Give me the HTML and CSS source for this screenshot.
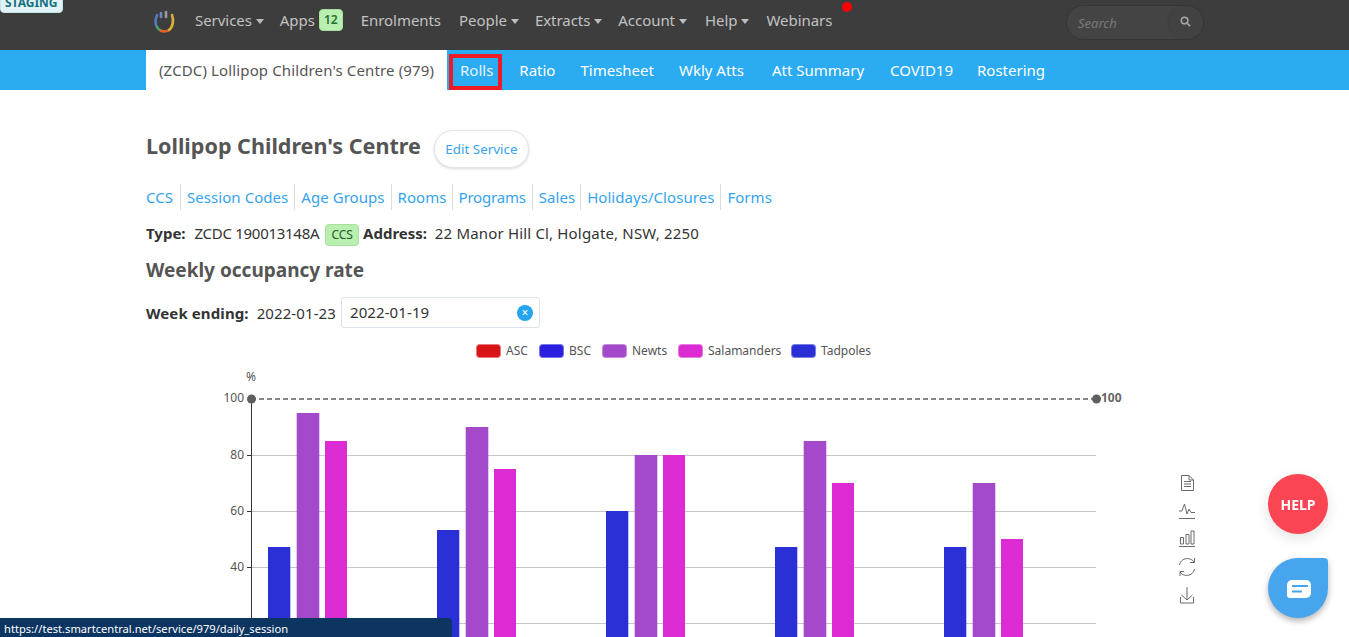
FILE: index.html
```html
<!DOCTYPE html>
<html lang="en">
<head>
<meta charset="utf-8">
<title>Lollipop Children's Centre</title>
<link rel="stylesheet" href="styles.css">
</head>
<body>
<div class="staging">STAGING</div>
<header class="topbar">
  <svg class="logo" viewBox="0 0 24 24" width="24" height="24" fill="none" stroke-width="2.6" stroke-linecap="round">
    <path d="M5 6 C3 11 3 15 5 18" stroke="#4f7cc8"/>
    <path d="M5 18 C6 20 7 21 9 21.800" stroke="#4fa566"/>
    <path d="M9 21.800 C12 22.800 15 22.300 17 21" stroke="#e2622c"/>
    <path d="M17 21 C21 18 22 11 20 6" stroke="#dcb034"/>
    <path d="M9 4 V8" stroke="#6d88b5"/>
    <path d="M14 3 V8" stroke="#9a9a9a"/>
  </svg>
  <nav class="mainnav">
    <a class="mainlink caret">Services</a>
    <a class="mainlink apps">Apps <span class="count">12</span></a>
    <a class="mainlink">Enrolments</a>
    <a class="mainlink caret">People</a>
    <a class="mainlink caret">Extracts</a>
    <a class="mainlink caret">Account</a>
    <a class="mainlink caret">Help</a>
    <a class="mainlink webinars">Webinars<span class="dot"></span></a>
  </nav>
  <div class="search">
    <span class="search-text">Search</span>
    <span class="search-btn">
      <svg viewBox="0 0 12 12" width="11" height="11" fill="none" stroke="#a5a5a5" stroke-width="1.7"><circle cx="5" cy="5" r="3.600"/><path d="M8 8l3 3"/></svg>
    </span>
  </div>
</header>
<div class="subnav">
  <span class="service-tab">(ZCDC) Lollipop Children's Centre (979)</span>
  <a class="sublink rolls">Rolls</a>
  <a class="sublink">Ratio</a>
  <a class="sublink">Timesheet</a>
  <a class="sublink">Wkly Atts</a>
  <a class="sublink">Att Summary</a>
  <a class="sublink">COVID19</a>
  <a class="sublink">Rostering</a>
</div>
<main class="content">
  <div class="title-row">
    <h1 class="title">Lollipop Children's Centre</h1>
    <button class="edit-btn">Edit Service</button>
  </div>
  <div class="links">
    <a>CCS</a><a>Session Codes</a><a>Age Groups</a><a>Rooms</a><a>Programs</a><a>Sales</a><a>Holidays/Closures</a><a>Forms</a>
  </div>
  <p class="info"><b>Type:</b>&nbsp; <span class="svc-id">ZCDC 190013148A</span> <span class="ccs">CCS</span> <b>Address:</b>&nbsp; <span class="address">22 Manor Hill Cl, Holgate, NSW, 2250</span></p>
  <h2 class="subtitle">Weekly occupancy rate</h2>
  <div class="week"><b>Week ending:</b><span class="week-date">2022-01-23</span><div class="date-input">2022-01-19<span class="clear">×</span></div></div>
  <svg class="chart" viewBox="146 340 1060 297" width="1060" height="297">
    <g class="legend">
      <rect x="476.500" y="344.500" width="24" height="13" rx="3" fill="#d81416" stroke="#e9797b"/><text x="506" y="355">ASC</text>
      <rect x="539.500" y="344.500" width="24" height="13" rx="3" fill="#2c1fe0" stroke="#7a72ec"/><text x="569" y="355">BSC</text>
      <rect x="602.500" y="344.500" width="24" height="13" rx="3" fill="#a349c9" stroke="#c48ade"/><text x="632" y="355">Newts</text>
      <rect x="678.500" y="344.500" width="24" height="13" rx="3" fill="#dc2bd3" stroke="#ea7de4"/><text x="708" y="355">Salamanders</text>
      <rect x="791.500" y="344.500" width="24" height="13" rx="3" fill="#2a30d6" stroke="#7a7ee4"/><text x="821" y="355">Tadpoles</text>
    </g>
    <g class="grid">
      <path d="M252 455.500H1096M252 511.500H1096M252 567.500H1096M252 623.500H1096"/>
    </g>
    <g class="axis-labels">
      <text x="251" y="381" text-anchor="middle">%</text>
      <text x="244" y="402" text-anchor="end">100</text>
      <text x="244" y="459" text-anchor="end">80</text>
      <text x="244" y="515" text-anchor="end">60</text>
      <text x="244" y="571" text-anchor="end">40</text>
      <text x="244" y="627" text-anchor="end">20</text>
    </g>
    <path class="axis" d="M251.500 399V637M247 455.500H252M247 511.500H252M247 567.500H252M247 623.500H252"/>
    <g fill="#2a30d6">
      <rect x="268" y="547" width="22.300" height="90"/>
      <rect x="437" y="530" width="22.300" height="107"/>
      <rect x="606" y="511" width="22.300" height="126"/>
      <rect x="775" y="547" width="22.300" height="90"/>
      <rect x="944" y="547" width="22.300" height="90"/>
    </g>
    <g fill="#a349c9">
      <rect x="296.700" y="413" width="22.600" height="224"/>
      <rect x="465.700" y="427" width="22.600" height="210"/>
      <rect x="634.700" y="455" width="22.600" height="182"/>
      <rect x="803.700" y="441" width="22.600" height="196"/>
      <rect x="972.700" y="483" width="22.600" height="154"/>
    </g>
    <g fill="#dc2bd3">
      <rect x="325" y="441" width="22" height="196"/>
      <rect x="494" y="469" width="22" height="168"/>
      <rect x="663" y="455" width="22" height="182"/>
      <rect x="832" y="483" width="22" height="154"/>
      <rect x="1001" y="539" width="22" height="98"/>
    </g>
    <path class="markline" d="M251 399H1096"/>
    <circle cx="251.500" cy="399" r="4.500" fill="#5f5f5f"/>
    <circle cx="1096.500" cy="399" r="4.500" fill="#5f5f5f"/>
    <text class="mark-label" x="1101" y="402">100</text>
    <g class="toolbox">
      <path d="M1181.500 475.500H1189L1193.500 480V490.500H1181.500ZM1189 475.500V480H1193.500M1184 481.500H1191M1184 484H1191M1184 486.500H1191"/>
      <path d="M1179 518.500H1195M1179 511H1182L1184.500 504L1187 514L1189 509L1191 512.500H1195"/>
      <path d="M1179 546.500H1195M1180.500 537.500H1183.500V544H1180.500ZM1186 534.500H1189V544H1186ZM1191 531H1194V544H1191Z"/>
      <path d="M1179.500 565C1181 557 1191 557 1194 562M1194.500 569C1193 577 1183 577 1180 572M1194.500 558V562.500H1190M1180 576V571.500H1184"/>
      <path d="M1187 587V600M1181.500 595L1187 600L1192.500 595M1180.500 597V603H1193.500V597"/>
    </g>
  </svg>
</main>
<a class="help-fab">HELP</a>
<a class="chat-fab">
  <svg viewBox="0 0 24 18" width="24" height="18"><path d="M5 0H19A5 5 0 0 1 24 5V13A5 5 0 0 1 19 18H3A3 3 0 0 1 0 15V5A5 5 0 0 1 5 0Z" fill="#fff"/><path d="M5 6H21M5 11.500H15" stroke="#46a5ec" stroke-width="2"/></svg>
</a>
<div class="status">https://test.smartcentral.net/service/979/daily_session</div>
</body>
</html>
```
FILE: styles.css
```css
* { box-sizing: border-box; }
html, body { margin: 0; height: 100%; overflow: hidden; }
body { font-family: "Noto Sans", "Open Sans", sans-serif; font-size: 15px; color: #333; background: #fff; }

.staging { position: absolute; left: 0; top: -7px; height: 20px; padding: 0 4px; background: #e1f3f6; border-radius: 0 0 4px 4px; border: 1px solid #c5e3e8; color: #17707f; font-size: 12px; font-weight: 700; line-height: 18px; }

.topbar { height: 50px; background: #3d3d3d; display: flex; align-items: flex-start; padding-left: 152px; }
.logo { margin-top: 9px; flex: none; }
.mainnav { display: flex; margin-left: 19px; padding-top: 9px; gap: 16px; }
.mainlink { position: relative; color: #c2c2c2; line-height: 22px; display: flex; align-items: center; white-space: pre; letter-spacing: -.05px; }
.mainlink:nth-child(2), .mainlink:nth-child(3), .mainlink:nth-child(6) { margin-right: 2px; }
.mainlink:nth-child(7) { margin-right: 1px; }
.caret::after { content: ""; margin-left: 4px; margin-top: 2px; border: 4px solid transparent; border-top: 5px solid #bdbdbd; border-bottom: 0; }
.count { background: #b9efb0; color: #24702c; border-radius: 4px; font-size: 12px; font-weight: 600; height: 22px; min-width: 24px; text-align: center; border: 1px solid #a5e09c; line-height: 20px; padding: 0 3px; }
.dot { position: absolute; right: -20px; top: -7px; width: 10px; height: 10px; border-radius: 50%; background: #f00; }
.search { position: absolute; left: 1066px; top: 5px; width: 138px; height: 35px; border-radius: 18px; background: #444; border: 1px solid #353535; display: flex; align-items: center; justify-content: space-between; padding-left: 11px; }
.search-text { color: #7a7a7a; font-size: 13px; font-style: italic; }
.search-btn { width: 34px; height: 33px; border-radius: 50%; background: #424242; display: flex; align-items: center; justify-content: center; padding: 0 2px 2px 0; box-shadow: -1px 0 2px #3d3d3d; }

.subnav { height: 40px; background: #2babf2; padding-left: 146px; display: flex; align-items: stretch; }
.service-tab { background: #fff; color: #555; width: 301px; margin-right: 2px; display: flex; align-items: center; justify-content: center; white-space: nowrap; letter-spacing: .13px; }
.sublink { color: #fff; display: flex; align-items: center; margin-right: 26px; white-space: nowrap; }
.sublink:nth-child(3), .sublink:nth-child(4) { margin-right: 25px; }
.sublink:nth-child(5) { margin-right: 28px; }
.sublink:nth-child(7) { margin-right: 24px; }
.rolls { height: 36px; margin-top: 4px; border: 4px solid #ee1a24; padding: 0 5px 4px 7px; margin-right: 17px; color: #e6f5ff; }

.content { padding: 40px 0 0 146px; }
.title-row { display: flex; align-items: center; height: 38px; }
.title { margin: 0; color: #555; font-size: 21.550px; font-weight: 700; line-height: 30px; padding-bottom: 6px; }
.edit-btn { margin-left: 13px; width: 95px; height: 38px; background: #fff; border: 1px solid #e4e4e4; border-radius: 19px; box-shadow: 0 1px 3px rgba(0,0,0,.15); color: #36a3ee; font: 13.400px "Noto Sans", sans-serif; padding: 0; }
.links { display: flex; margin-top: 16px; height: 26px; align-items: center; letter-spacing: .05px; }
.links a { color: #36a3ee; padding: 0 6px 0 6px; border-left: 1px solid #ddd; line-height: 26px; white-space: nowrap; }
.links a:first-child { border-left: 0; padding-left: 0; padding-right: 7px; }
.links a:nth-child(4) { padding-right: 5px; }
.links a:nth-child(5) { letter-spacing: -.2px; }
.links a:nth-child(6) { padding-right: 5px; }
.info { margin: 12px 0 0; line-height: 22px; height: 24px; white-space: pre-wrap; }
.svc-id { letter-spacing: -.28px; margin-left: 1px; }
.address { letter-spacing: .17px; }
.ccs { display: inline-block; background: #b9efb0; border: 1px solid #a5e09c; border-radius: 4px; color: #1f5e26; font-size: 12px; line-height: 20px; height: 22px; width: 34px; margin-left: 2px; text-align: center; letter-spacing: 0; }
.subtitle { margin: 11px 0 0; color: #555; font-size: 19px; font-weight: 700; line-height: 26px; }
.week { display: flex; align-items: center; margin-top: 14px; height: 31px; white-space: pre; letter-spacing: .1px; }
.week-date { margin-left: 8px; }
.date-input { position: relative; width: 199px; height: 31px; margin-left: 5px; border: 1px solid #dde3ea; border-radius: 3px; padding-left: 8px; line-height: 29px; background: #fff; }
.clear { position: absolute; right: 6px; top: 7px; width: 16px; height: 16px; border-radius: 50%; background: #25a4ef; color: #fff; font-size: 12px; line-height: 16px; text-align: center; }

.chart { display: block; margin-top: 12px; overflow: visible; }
.legend text { font-size: 12px; fill: #555; }
.grid path { stroke: #c6c6c6; stroke-width: 1; fill: none; }
.axis-labels text { font-size: 12px; fill: #555; }
.axis { stroke: #333; stroke-width: 1; fill: none; }
.markline { stroke: #5f5f5f; stroke-width: 1.500; stroke-dasharray: 5 3; fill: none; }
.mark-label { font-size: 12px; font-weight: 700; fill: #666; }
.toolbox path { stroke: #6a6a6a; stroke-width: 1; fill: none; }

.help-fab { position: fixed; left: 1268px; top: 474px; width: 60px; height: 60px; border-radius: 50%; background: #fc4552; color: #fff; font-weight: 700; font-size: 14px; display: flex; align-items: center; justify-content: center; box-shadow: 0 4px 14px rgba(0,0,0,.12); }
.chat-fab { position: fixed; left: 1268px; top: 558px; width: 60px; height: 60px; border-radius: 50% 4px 50% 50%; background: #46a5ec; display: flex; align-items: center; justify-content: center; padding: 2px 0 0 2px; box-shadow: 0 3px 6px rgba(0,0,0,.3); }

.status { position: fixed; left: 0; bottom: 0; width: 452px; height: 19px; background: #0d3562; color: #fff; font-size: 11.150px; line-height: 22px; padding-left: 4px; border-radius: 0 4px 0 0; white-space: nowrap; }
```
